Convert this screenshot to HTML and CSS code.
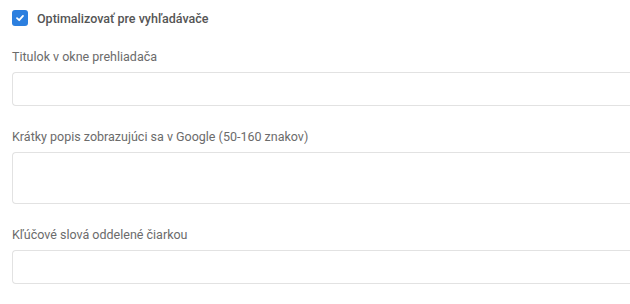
FILE: index.html
```html
<!DOCTYPE html>
<html lang="sk">
<head>
<meta charset="utf-8">
<link rel="stylesheet" href="styles.css">
</head>
<body>
<form class="seo">
  <label class="check">
    <span class="box">
      <svg width="10" height="10" viewBox="0 0 10 10"><path d="M2 5.2 L4.2 7.2 L8 2.9" fill="none" stroke="#fff" stroke-width="1.8" stroke-linecap="round" stroke-linejoin="round"/></svg>
    </span>
    <span class="check-text">Optimalizovať pre vyhľadávače</span>
  </label>
  <div class="field">
    <div class="label">Titulok v okne prehliadača</div>
    <div class="input"></div>
  </div>
  <div class="field">
    <div class="label">Krátky popis zobrazujúci sa v Google (50-160 znakov)</div>
    <div class="input area"></div>
  </div>
  <div class="field">
    <div class="label">Kľúčové slová oddelené čiarkou</div>
    <div class="input"></div>
  </div>
</form>
</body>
</html>
```
FILE: styles.css
```css
html, body {
  margin: 0;
  padding: 0;
  background: #fff;
  overflow: hidden;
}
body {
  font-family: Roboto, "Liberation Sans", sans-serif;
}
.seo {
  padding: 10px 0 0 12px;
  display: flex;
  flex-direction: column;
}
.check {
  display: flex;
  align-items: center;
  height: 16px;
  gap: 9px;
}
.box {
  width: 16px;
  height: 16px;
  border-radius: 3px;
  background: #2c7fdf;
  display: flex;
  align-items: center;
  justify-content: center;
}
.check-text {
  font-size: 12.5px;
  font-weight: 500;
  color: #555;
}
.field {
  display: flex;
  flex-direction: column;
  margin-top: 23px;
}
.field + .field {
  margin-top: 23px;
}
.label {
  font-size: 12.5px;
  line-height: 16px;
  color: #6b6b6b;
  margin-bottom: 7px;
}
.input {
  height: 32px;
  border: 1px solid #e2e2e2;
  border-right: none;
  border-radius: 4px 0 0 4px;
  background: #fff;
}
.input.area {
  height: 50px;
}
```
